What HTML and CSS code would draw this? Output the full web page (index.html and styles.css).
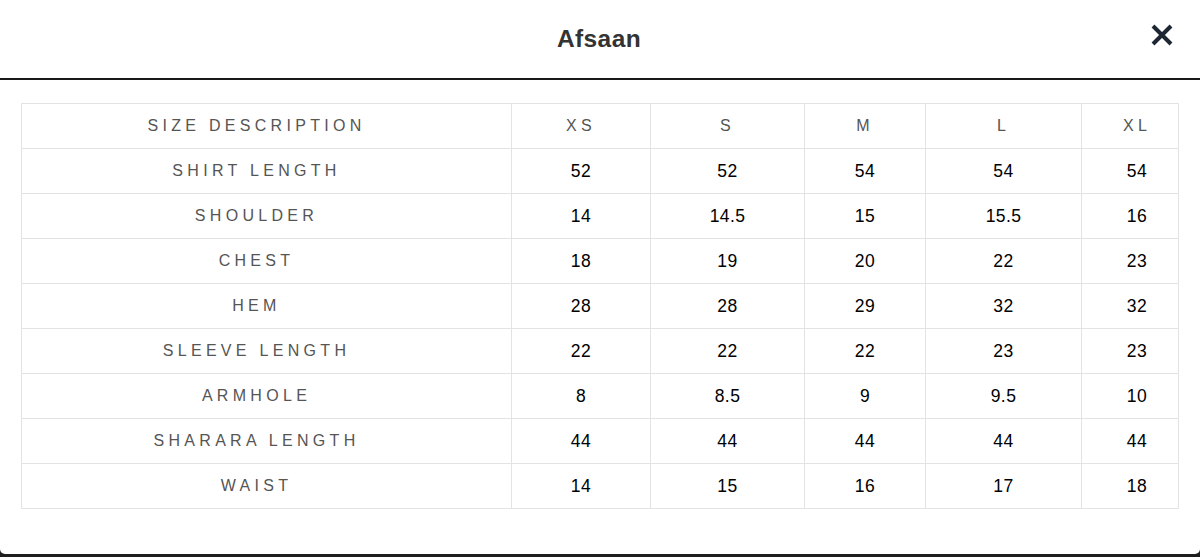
FILE: index.html
```html
<!DOCTYPE html>
<html lang="en">
<head>
<meta charset="utf-8">
<title>Afsaan – Size Chart</title>
<link rel="stylesheet" href="styles.css">
</head>
<body>
<div class="modal">
  <header class="modal-header">
    <h2 class="modal-title">Afsaan</h2>
    <button class="close" aria-label="Close">
      <svg width="24" height="24" viewBox="0 0 24 24"><path d="M3 3 L21 21 M21 3 L3 21" stroke="#1d2733" stroke-width="4" stroke-linecap="butt" fill="none"/></svg>
    </button>
  </header>
  <div class="modal-body">
    <table class="size-table">
      <colgroup>
        <col class="c1"><col class="c2"><col class="c3"><col class="c4"><col class="c5"><col class="c6">
      </colgroup>
      <thead>
        <tr><th class="label">Size Description</th><th>XS</th><th>S</th><th>M</th><th>L</th><th class="last">XL</th></tr>
      </thead>
      <tbody>
        <tr><td class="label">Shirt Length</td><td>52</td><td>52</td><td>54</td><td>54</td><td class="last">54</td></tr>
        <tr><td class="label">Shoulder</td><td>14</td><td>14.5</td><td>15</td><td>15.5</td><td class="last">16</td></tr>
        <tr><td class="label">Chest</td><td>18</td><td>19</td><td>20</td><td>22</td><td class="last">23</td></tr>
        <tr><td class="label">Hem</td><td>28</td><td>28</td><td>29</td><td>32</td><td class="last">32</td></tr>
        <tr><td class="label">Sleeve Length</td><td>22</td><td>22</td><td>22</td><td>23</td><td class="last">23</td></tr>
        <tr><td class="label">Armhole</td><td>8</td><td>8.5</td><td>9</td><td>9.5</td><td class="last">10</td></tr>
        <tr><td class="label">Sharara Length</td><td>44</td><td>44</td><td>44</td><td>44</td><td class="last">44</td></tr>
        <tr><td class="label">Waist</td><td>14</td><td>15</td><td>16</td><td>17</td><td class="last">18</td></tr>
      </tbody>
    </table>
  </div>
</div>
</body>
</html>
```

FILE: styles.css
```css
html, body {
  margin: 0;
  padding: 0;
  height: 100%;
}
body {
  background: #1e1e1e;
  font-family: "Liberation Sans", Arial, sans-serif;
  overflow: hidden;
}
.modal {
  background: #fff;
  height: 554px;
  border-radius: 0 0 5px 5px;
  display: flex;
  flex-direction: column;
}
.modal-header {
  height: 78px;
  border-bottom: 2px solid #1a1a1a;
  display: flex;
  align-items: center;
  justify-content: center;
  position: relative;
}
.modal-title {
  margin: 0 0 0 -2px;
  font-size: 24.5px;
  font-weight: bold;
  color: #333;
  letter-spacing: 0.4px;
}
.close {
  position: absolute;
  right: 26px;
  top: 23px;
  width: 24px;
  height: 24px;
  padding: 0;
  border: 0;
  background: none;
  cursor: pointer;
}
.close svg { display: block; }
.modal-body {
  padding: 23px 22px 0 21px;
}
.size-table {
  width: 1157px;
  border-collapse: collapse;
  table-layout: fixed;
}
.c1 { width: 490px; }
.c2 { width: 139px; }
.c3 { width: 154px; }
.c4 { width: 121px; }
.c5 { width: 156px; }
.c6 { width: 97px; }
.size-table th,
.size-table td {
  height: 44px;
  padding: 0;
  border: 1px solid #e3e3e3;
  text-align: center;
  vertical-align: middle;
  font-size: 17.5px;
  color: #000;
  font-weight: normal;
  letter-spacing: 0.4px;
}
.size-table th {
  text-transform: uppercase;
  color: #555;
  font-size: 16px;
  letter-spacing: 4.3px;
}
.size-table .label {
  text-transform: uppercase;
  color: #555;
  font-size: 16px;
  letter-spacing: 4.3px;
  padding-right: 20px;
}
.size-table .last {
  padding-left: 14px;
}
```
